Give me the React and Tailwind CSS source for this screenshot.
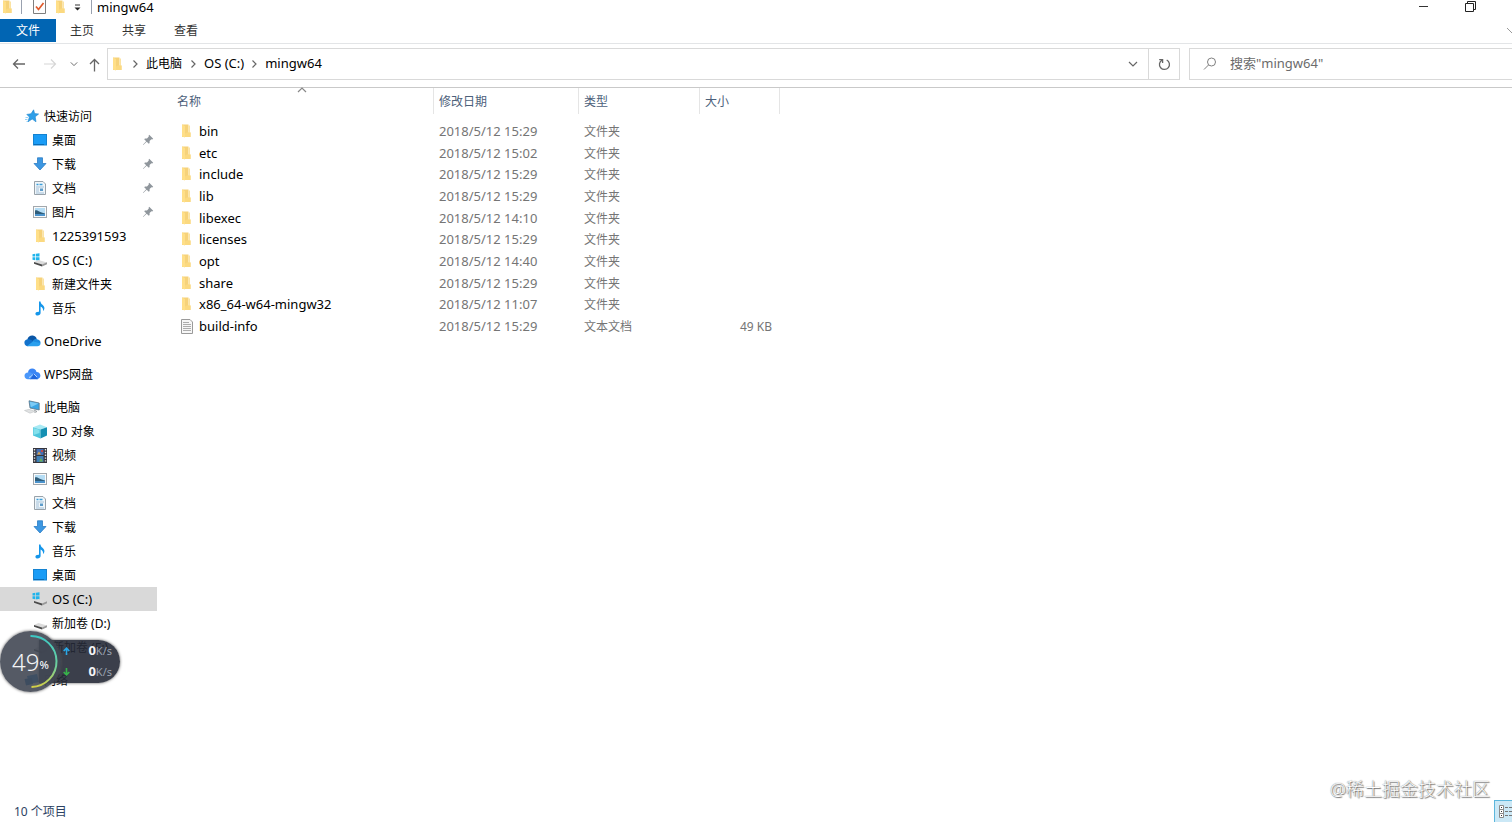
import { clsx } from "clsx";

function FolderIcon() {
    return (
        <svg width="10" height="14" viewBox="0 0 10 14" className="shrink-0">
            <path d="M1 0.5 H7.5 V8.5 H9.5 V13 H1 Z" fill="#f6d27a" />
            <path d="M7.5 1.5 H9 V9 H7.5 Z" fill="#fbe3a3" />
            <path d="M1 0.5 L4 2 V13.5 L1 12.5 Z" fill="#ffdf88" />
            <path d="M4 9.5 L6 8.5 H9.5 V13 H4 Z" fill="#fbd980" />
        </svg>
    );
}

function TextFileIcon() {
    return (
        <svg width="12" height="15" viewBox="0 0 12 15" className="shrink-0">
            <path d="M0.5 0.5 H9 L11.5 3 V14.5 H0.5 Z" fill="#f7f7f7" stroke="#9a9a9a" />
            <path d="M2 3.5 H8 M2 5.5 H10 M2 7.5 H10 M2 9.5 H10 M2 11.5 H10" stroke="#adadad" />
        </svg>
    );
}

function StarIcon() {
    return (
        <svg width="14" height="14" viewBox="0 0 14 14">
            <path d="M8.6 0.8 L9.6 4.6 L13.6 5 L10.2 7.8 L11 12.8 L7.2 10 L3 12.8 L4.4 8 L1.8 5.4 L6 4.8 Z" fill="#2f9fe8" stroke="#1b84cf" strokeWidth="0.6" />
            <path d="M0.5 8.5 H3 M0 10.5 H2.5 M1.5 12.5 H3" stroke="#7cc6f5" strokeWidth="0.8" />
        </svg>
    );
}

function DesktopIcon() {
    return (
        <svg width="14" height="12" viewBox="0 0 14 12">
            <rect x="0.5" y="0.5" width="13" height="10.5" fill="#1a9cf6" stroke="#1583d1" />
            <path d="M1 10.5 H11" stroke="#0c6cb5" />
        </svg>
    );
}

function DownloadIcon() {
    return (
        <svg width="14" height="14" viewBox="0 0 14 14">
            <path d="M4.5 0.8 H9.5 V6.5 H13 L7 13 L1 6.5 H4.5 Z" fill="#3c97e2" stroke="#2b7cc4" strokeWidth="0.8" />
        </svg>
    );
}

function DocumentIcon() {
    return (
        <svg width="12" height="14" viewBox="0 0 12 14">
            <path d="M0.5 0.5 H9 L11.5 3 V13.5 H0.5 Z" fill="#f0f6fa" stroke="#98a2aa" />
            <path d="M2.5 3.5 H4.5 M5.5 3.5 H8.5" stroke="#3b9fdc" strokeWidth="1.4" />
            <path d="M2 6 H10 M2 8 H5 M2 10 H5 M2 12 H10" stroke="#8fb4cf" strokeWidth="0.8" />
            <rect x="6" y="7.5" width="3" height="2.5" fill="#5d9cca" />
        </svg>
    );
}

function PictureIcon() {
    return (
        <svg width="14" height="12" viewBox="0 0 14 12">
            <rect x="0.5" y="0.5" width="13" height="11" fill="#fafafa" stroke="#a2a8ad" />
            <rect x="2" y="2" width="10" height="8" fill="#b5ddf5" />
            <path d="M2 4.5 C4 3.5 6 6 12 7.5 V8.5 H2 Z" fill="#2f5d7a" />
            <path d="M2 8 H12 V10 H2 Z" fill="#4b93cc" />
        </svg>
    );
}

function DriveIcon({ system }) {
    return (
        <svg width="16" height="14" viewBox="0 0 16 14">
            {system && (
                <path
                    d="M0.5 1.2 L3.3 0.8 V3.6 H0.5 Z M4 0.7 L7.5 0.2 V3.6 H4 Z M0.5 4.3 H3.3 V7.2 L0.5 6.8 Z M4 4.3 H7.5 V7.8 L4 7.3 Z"
                    fill="#20b4ec"
                />
            )}
            <path d="M2 9 L6.5 7 L15 9.5 L10 12 Z" fill="#dcdcdc" />
            <path d="M2 9 L10 11.5 V13.5 L2 10.8 Z" fill="#4a4a4a" />
            <path d="M10 11.5 L15 9.3 V11.3 L10 13.5 Z" fill="#999" />
        </svg>
    );
}

function MusicIcon() {
    return (
        <svg width="12" height="15" viewBox="0 0 12 15">
            <path d="M5 0.5 H6.5 C6.7 3.5 10.4 4.2 10.4 7 C10.4 8.3 9.8 9.3 9 10 C9.4 7.8 8.4 6.4 6.6 5.6 V12 C6.6 13.5 5.2 14.5 3.6 14.5 C2.3 14.5 1.4 13.8 1.4 12.7 C1.4 11.4 2.8 10.5 5 10.7 Z" fill="#1596ea" />
        </svg>
    );
}

function OneDriveIcon() {
    return (
        <svg width="17" height="12" viewBox="0 0 17 12">
            <path d="M3.3 4.5 C4 1.5 6.5 0.3 8.8 0.6 C11 0.9 12.4 2.3 12.8 4.2 L8 7 Z" fill="#0a56a6" />
            <path d="M3.5 4.3 C1.4 4.7 0.3 6.2 0.4 7.8 C0.5 9.8 2 11.2 4 11.3 L11 7.5 C8.5 5.5 6.2 4 3.5 4.3 Z" fill="#1272cc" />
            <path d="M8.5 6.3 C10 4.2 11.7 3.8 13.1 4.2 C15.2 4.6 16.6 6 16.6 7.8 L14 9 Z" fill="#1d8be0" />
            <path d="M3 11.1 L9 6.4 L16.6 8 C16.5 10 15.2 11.3 13.4 11.3 H4 Z" fill="#2aa0ee" />
        </svg>
    );
}

function WpsIcon() {
    return (
        <svg width="17" height="12" viewBox="0 0 17 12">
            <path d="M4 4.5 C4.2 2 6 0.5 8.2 0.5 C10.5 0.5 12.1 1.9 12.5 4.1 C14.8 4.2 16.4 5.7 16.4 7.6 C16.4 9.7 15 11.2 12.8 11.2 L6 6 Z" fill="#3b86f5" />
            <path d="M4 4.4 C1.8 4.4 0.5 5.9 0.5 7.7 C0.5 9.8 2 11.2 4 11.2 H6.5 L9.5 6.6 C8 4.6 6.2 4.2 4 4.4 Z" fill="#4a97fa" />
            <path d="M6 11.2 L9.8 5.8 L14 11.2 Z" fill="#1f66dc" />
            <path d="M5 9.4 C6.8 9.2 7.6 8 8.4 6.6 M9.8 5.8 L13 9" stroke="#d9eaff" strokeWidth="0.8" fill="none" />
        </svg>
    );
}

function ComputerIcon() {
    return (
        <svg width="16" height="14" viewBox="0 0 16 14">
            <path d="M5 0.8 L15.2 3 V10 L6 8 Z" fill="#3ba5e4" stroke="#5e7587" strokeWidth="0.8" />
            <path d="M5.8 1.8 L14.5 3.6 L6.8 7.3 Z" fill="#7dcbf5" />
            <path d="M0.5 10.5 L5 9.3 L11 11.3 L6 13.2 Z" fill="#e0e2e3" stroke="#b8bcbf" strokeWidth="0.5" />
            <path d="M10 10 L13 11.5 L10.5 12.5" stroke="#9a9fa3" fill="none" />
        </svg>
    );
}

function CubeIcon() {
    return (
        <svg width="16" height="15" viewBox="0 0 16 15">
            <path d="M1 3.2 L8 0.5 L15 3.2 L8.5 5.5 Z" fill="#a9eaf4" />
            <path d="M1 3.2 L8.5 5.5 V14.5 L1 11.6 Z" fill="#4cc5dc" />
            <path d="M8.5 5.5 L15 3.2 V11.6 L8.5 14.5 Z" fill="#1590b3" />
            <path d="M1.5 4 L7.5 5.8 V9 L1.5 11 Z" fill="#84e0ec" />
        </svg>
    );
}

function VideoIcon() {
    return (
        <svg width="14" height="15" viewBox="0 0 14 15">
            <rect width="14" height="15" fill="#35353d" />
            <path d="M1.5 1 V15 M12.5 1 V15" stroke="#e8e8e8" strokeWidth="1.4" strokeDasharray="1.4 1.4" />
            <rect x="3.5" y="1" width="7" height="6" fill="#476fb2" />
            <rect x="3.5" y="8" width="7" height="6" fill="#3f7fb8" />
            <path d="M4 6.5 L6 3.5 L8 6.5 Z" fill="#d8a34c" />
            <path d="M6 13.5 L8 10 L10 13.5 Z" fill="#6cae54" />
            <rect x="8" y="2" width="2" height="2" fill="#c04a4a" />
        </svg>
    );
}

function NetworkIcon() {
    return (
        <svg width="16" height="14" viewBox="0 0 16 14">
            <path d="M3 3 L13 1 L15 9 L5 11 Z" fill="#1f8fe8" />
            <path d="M0.5 6 L8 5 L9 11 L2 12.5 Z" fill="#0f6fc0" />
        </svg>
    );
}

function PinIcon() {
    return (
        <svg width="12" height="12" viewBox="0 0 12 12" fill="#8f969c">
            <path d="M7.2 0.8 L11.2 4.8 L10.2 5.4 L9.4 5.2 L7.6 7 L7.6 9 L6.8 9.8 L4.7 7.7 L1.2 11 L0.9 10.8 L4.2 7.2 L2.2 5.2 L3 4.4 L5 4.4 L6.8 2.6 L6.6 1.8 Z" />
        </svg>
    );
}

function Chevron({ direction = "down", className }) {
    const paths = {
        down: "M1 3 L5 7 L9 3",
        right: "M3.5 1.5 L7 5 L3.5 8.5",
        up: "M1 7 L5 3 L9 7",
    };
    return (
        <svg width="10" height="10" viewBox="0 0 10 10" className={className}>
            <path d={paths[direction]} fill="none" stroke="currentColor" strokeWidth="1.2" />
        </svg>
    );
}

const groups = [
    {
        title: "快速访问",
        icon: <StarIcon />,
        items: [
            { label: "桌面", icon: <DesktopIcon />, pinned: true },
            { label: "下载", icon: <DownloadIcon />, pinned: true },
            { label: "文档", icon: <DocumentIcon />, pinned: true },
            { label: "图片", icon: <PictureIcon />, pinned: true },
            { label: "1225391593", icon: <FolderIcon />, latin: true },
            { label: "OS (C:)", icon: <DriveIcon system />, latin: true },
            { label: "新建文件夹", icon: <FolderIcon /> },
            { label: "音乐", icon: <MusicIcon /> },
        ],
    },
    { title: "OneDrive", icon: <OneDriveIcon />, latin: true, items: [] },
    { title: "WPS网盘", icon: <WpsIcon />, items: [] },
    {
        title: "此电脑",
        icon: <ComputerIcon />,
        items: [
            { label: "3D 对象", icon: <CubeIcon /> },
            { label: "视频", icon: <VideoIcon /> },
            { label: "图片", icon: <PictureIcon /> },
            { label: "文档", icon: <DocumentIcon /> },
            { label: "下载", icon: <DownloadIcon /> },
            { label: "音乐", icon: <MusicIcon /> },
            { label: "桌面", icon: <DesktopIcon /> },
            { label: "OS (C:)", icon: <DriveIcon system />, latin: true, selected: true },
            { label: "新加卷 (D:)", icon: <DriveIcon /> },
            { label: "新加卷 (E:)", icon: <DriveIcon /> },
        ],
    },
    { title: "网络", icon: <NetworkIcon />, items: [] },
];

const files = [
    { name: "bin", date: "2018/5/12 15:29" },
    { name: "etc", date: "2018/5/12 15:02" },
    { name: "include", date: "2018/5/12 15:29" },
    { name: "lib", date: "2018/5/12 15:29" },
    { name: "libexec", date: "2018/5/12 14:10" },
    { name: "licenses", date: "2018/5/12 15:29" },
    { name: "opt", date: "2018/5/12 14:40" },
    { name: "share", date: "2018/5/12 15:29" },
    { name: "x86_64-w64-mingw32", date: "2018/5/12 11:07" },
    { name: "build-info", date: "2018/5/12 15:29", text: true, size: "49 KB" },
];

function TitleBar() {
    return (
        <header className="flex h-[19px] items-start justify-between">
            <div className="flex h-[14px] items-center">
                <div className="flex w-[22px] justify-start border-r border-gray-400 pl-[2px]">
                    <FolderIcon />
                </div>
                <button aria-label="属性" className="ml-[11px]">
                    <svg width="13" height="14" viewBox="0 0 13 14">
                        <path d="M0.5 0 V13.5 H12.5 V0" fill="#fdfdfd" stroke="#7e7e7e" />
                        <path d="M3 6.5 L5.5 9.5 L10.5 3" fill="none" stroke="#e0592a" strokeWidth="1.7" />
                    </svg>
                </button>
                <button aria-label="新建文件夹" className="ml-[9px]">
                    <FolderIcon />
                </button>
                <button aria-label="自定义快速访问工具栏" className="ml-[9px]">
                    <svg width="7" height="8" viewBox="0 0 7 8">
                        <path d="M1 2 H6" stroke="#333" />
                        <path d="M0.5 4.5 H6.5 L3.5 7.5 Z" fill="#222" />
                    </svg>
                </button>
                <h1 className="ml-[10px] border-l border-gray-400 pl-[5px] text-[13px] leading-[14px] text-black">mingw64</h1>
            </div>
            <div className="flex h-[13px] items-center gap-9 pr-9">
                <button aria-label="最小化">
                    <svg width="11" height="11" viewBox="0 0 11 11">
                        <path d="M1 5.5 H10" stroke="#333" />
                    </svg>
                </button>
                <button aria-label="还原">
                    <svg width="11" height="11" viewBox="0 0 11 11" fill="none" stroke="#222">
                        <path d="M0.5 2.5 H8.5 V10.5 H0.5 Z M2.5 2.5 V0.5 H10.5 V8.5 H8.5" />
                    </svg>
                </button>
            </div>
        </header>
    );
}

function Ribbon() {
    return (
        <nav className="flex h-[25px] items-start border-b border-[#e3e5e7] text-xs text-[#333]">
            <button className="h-[23px] w-14 bg-[#0165b3] pt-px text-white">文件</button>
            <button className="h-[23px] w-[52px] pt-px">主页</button>
            <button className="h-[23px] w-[52px] pt-px">共享</button>
            <button className="h-[23px] w-[52px] pt-px">查看</button>
            <button aria-label="展开功能区" className="ml-auto h-[23px]">
                <svg width="6" height="10" viewBox="0 0 6 10">
                    <path d="M1 2 L6 7" stroke="#999" />
                </svg>
            </button>
        </nav>
    );
}

function AddressBar() {
    return (
        <div className="flex h-11 items-start border-b border-[#c9c9c9] pt-1">
            <div className="flex h-8 w-[107px] items-center pl-3 text-[#666]">
                <button aria-label="后退">
                    <svg width="14" height="12" viewBox="0 0 14 12" fill="none" stroke="#666" strokeWidth="1.3">
                        <path d="M13 6 H1.5 M6 1.5 L1.5 6 L6 10.5" />
                    </svg>
                </button>
                <button aria-label="前进" className="ml-[17px]">
                    <svg width="14" height="12" viewBox="0 0 14 12" fill="none" stroke="#d6d6d6" strokeWidth="1.2">
                        <path d="M1 6 H12.5 M8 1.5 L12.5 6 L8 10.5" />
                    </svg>
                </button>
                <button aria-label="最近浏览的位置" className="ml-[13px]">
                    <Chevron className="size-2" />
                </button>
                <button aria-label="上移" className="ml-[11px] pt-[2px]">
                    <svg width="11" height="14" viewBox="0 0 11 14" fill="none" stroke="#666" strokeWidth="1.3">
                        <path d="M5.5 13.5 V1.5 M1 6 L5.5 1.5 L10 6" />
                    </svg>
                </button>
            </div>
            <div className="flex h-8 flex-1 items-center border border-[#d9d9d9] text-[13px] text-black">
                <span className="ml-1">
                    <FolderIcon />
                </span>
                <Chevron direction="right" className="ml-2 text-[#666]" />
                <a href="#pc" className="ml-1.5 text-xs">此电脑</a>
                <Chevron direction="right" className="ml-1.5 text-[#666]" />
                <a href="#c" className="ml-1.5">OS (C:)</a>
                <Chevron direction="right" className="ml-[5px] text-[#666]" />
                <a href="#mingw64" className="ml-1.5">mingw64</a>
                <button aria-label="以前的位置" className="ml-auto flex h-full w-[30px] items-center justify-center text-[#666]">
                    <Chevron />
                </button>
                <button aria-label="刷新" className="flex h-full w-[31px] items-center justify-center border-l border-[#d9d9d9]">
                    <svg width="13" height="13" viewBox="0 0 13 13" fill="none" stroke="#666" strokeWidth="1.3">
                        <path d="M8.7 2 A5 5 0 1 1 4 2.1" />
                        <path d="M1.2 1.6 H4.6 V5" />
                    </svg>
                </button>
            </div>
            <label className="ml-[9px] flex h-8 w-[323px] items-center border border-r-0 border-[#d9d9d9] pl-[13px]">
                <svg width="14" height="14" viewBox="0 0 14 14" fill="none" stroke="#808080">
                    <circle cx="8.5" cy="5" r="4" />
                    <path d="M5.5 8 L1 12.5" />
                </svg>
                <input
                    type="search"
                    aria-label="搜索"
                    placeholder={'搜索"mingw64"'}
                    className="ml-[13px] min-w-0 flex-1 text-[13px] outline-none placeholder:text-[#6b6b6b]"
                />
            </label>
        </div>
    );
}

function SidebarRow({ label, icon, latin, selected, pinned, nested }) {
    return (
        <a
            href="#"
            className={clsx(
                "flex h-6 items-center whitespace-nowrap text-black",
                nested ? "pl-[30px]" : "pl-[22px]",
                latin ? "text-[13px]" : "text-xs",
                selected && "bg-[#d9d9d9]"
            )}
        >
            <span className="mr-[2px] flex w-5 justify-center">{icon}</span>
            <span className="pt-px">{label}</span>
            {pinned && (
                <span className="mr-[3px] ml-auto">
                    <PinIcon />
                </span>
            )}
        </a>
    );
}

function Sidebar() {
    return (
        <aside className="flex w-[157px] shrink-0 flex-col gap-[9px] pt-4">
            {groups.map((group) => (
                <div key={group.title}>
                    <SidebarRow label={group.title} icon={group.icon} latin={group.latin} />
                    {group.items.map((item) => (
                        <SidebarRow key={item.label} nested {...item} />
                    ))}
                </div>
            ))}
        </aside>
    );
}

function HeaderCell({ children, className, sorted }) {
    return (
        <th className={clsx("relative h-8 p-0 text-left align-top font-normal", className)}>
            {sorted && <Chevron direction="up" className="absolute -top-[3px] left-1/2 -translate-x-1/2 text-[#888]" />}
            <div className="flex h-[26px] items-center border-r border-[#e5e5e5] pt-px pl-[5px]">{children}</div>
        </th>
    );
}

function FileTable() {
    return (
        <table className="h-[249px] w-[610px] table-fixed border-collapse text-xs text-[#757575]">
            <thead className="text-[#4c607a]">
                <tr>
                    <HeaderCell className="w-[264px]" sorted>
                        <span className="pl-[2px]">名称</span>
                    </HeaderCell>
                    <HeaderCell className="w-[145px]">修改日期</HeaderCell>
                    <HeaderCell className="w-[121px]">类型</HeaderCell>
                    <HeaderCell className="w-20">大小</HeaderCell>
                </tr>
            </thead>
            <tbody>
                {files.map((file) => (
                    <tr key={file.name}>
                        <td className="p-0">
                            <div className="flex items-center pl-[11px] text-[13px] leading-5 text-black">
                                <span className="mr-[5px] flex w-[13px] justify-start">
                                    {file.text ? <TextFileIcon /> : <FolderIcon />}
                                </span>
                                {file.name}
                            </div>
                        </td>
                        <td className="p-0 pl-[5px] text-[13px] leading-5">{file.date}</td>
                        <td className="p-0 pt-[2px] pl-[5px]">{file.text ? "文本文档" : "文件夹"}</td>
                        <td className="p-0 pt-[2px] pr-2 text-right">{file.size}</td>
                    </tr>
                ))}
            </tbody>
        </table>
    );
}

function SpeedWidget() {
    return (
        <div className="absolute top-[631px] left-0 flex h-[61px] items-center">
            <div className="relative z-10 flex size-[61px] items-center justify-center rounded-full bg-[#434854]/90 shadow-[0_0_3px_#555]">
                <svg width="61" height="61" viewBox="0 0 61 61" className="absolute inset-0" fill="none">
                    <defs>
                        <linearGradient id="ring" x1="0" y1="0" x2="0" y2="1">
                            <stop offset="0" stopColor="#3cc8c4" />
                            <stop offset="0.6" stopColor="#6fcf9b" />
                            <stop offset="1" stopColor="#d3cf45" />
                        </linearGradient>
                    </defs>
                    <path d="M30.5 5 A25.5 25.5 0 0 1 31.5 56" stroke="url(#ring)" strokeWidth="2" />
                </svg>
                <span className="text-2xl font-light text-gray-100">49</span>
                <span className="pt-2 text-[11px] font-medium text-gray-100">%</span>
            </div>
            <div className="-ml-[22px] flex h-[43px] w-[81px] flex-col justify-between rounded-r-full bg-[#262a37]/90 py-[2px] pr-2 pl-6 shadow-[0_0_3px_#555]">
                <SpeedRow color="#2aa8e8" up />
                <SpeedRow color="#37b54a" />
            </div>
        </div>
    );
}

function SpeedRow({ color, up }) {
    return (
        <div className="flex h-[18px] items-center justify-between">
            <svg width="7" height="8" viewBox="0 0 7 8" fill="none" stroke={color} strokeWidth="1.6">
                <path d={up ? "M3.5 8 V1.5 M0.7 4 L3.5 1.2 L6.3 4" : "M3.5 0 V6.5 M0.7 4 L3.5 6.8 L6.3 4"} />
            </svg>
            <span className="text-[11px] text-gray-400">
                <b className="text-[13px] text-gray-100">0</b>K/s
            </span>
        </div>
    );
}

function StatusBar() {
    return (
        <footer className="flex h-[22px] items-center justify-between pl-[14px] text-xs text-[#2c4263]">
            <span className="pt-[2px]">10 个项目</span>
            <button aria-label="详细信息" className="flex h-full w-[18px] items-center justify-end border border-r-0 border-b-0 border-[#5cb6dc] bg-[#cbe8f6]">
                <svg width="13" height="13" viewBox="0 0 13 13">
                    <path d="M0.5 0.5 H4.5 V12.5 H0.5 Z M0.5 4.5 H4.5 M0.5 8.5 H4.5" fill="#fff" stroke="#8a8a8a" />
                    <path d="M2 2.5 H3 M2 6.5 H3 M2 10.5 H3" stroke="#333" />
                    <path d="M6 2.5 H9 M10 2.5 H13 M6 6.5 H9 M10 6.5 H13 M6 10.5 H9 M10 10.5 H13" stroke="#777" />
                </svg>
            </button>
        </footer>
    );
}

export default function App() {
    return (
        <div className="relative flex min-h-screen flex-col overflow-hidden bg-white font-['Noto_Sans','Noto_Sans_CJK_SC',sans-serif]">
            <TitleBar />
            <Ribbon />
            <AddressBar />
            <div className="flex flex-1">
                <Sidebar />
                <main className="flex-1 pl-[13px]">
                    <FileTable />
                </main>
            </div>
            <StatusBar />
            <SpeedWidget />
            <p className="absolute right-[22px] bottom-[21px] text-lg leading-6 font-light text-white [text-shadow:0_0_1px_#555,1px_1px_1px_#777]">
                @稀土掘金技术社区
            </p>
        </div>
    );
}
